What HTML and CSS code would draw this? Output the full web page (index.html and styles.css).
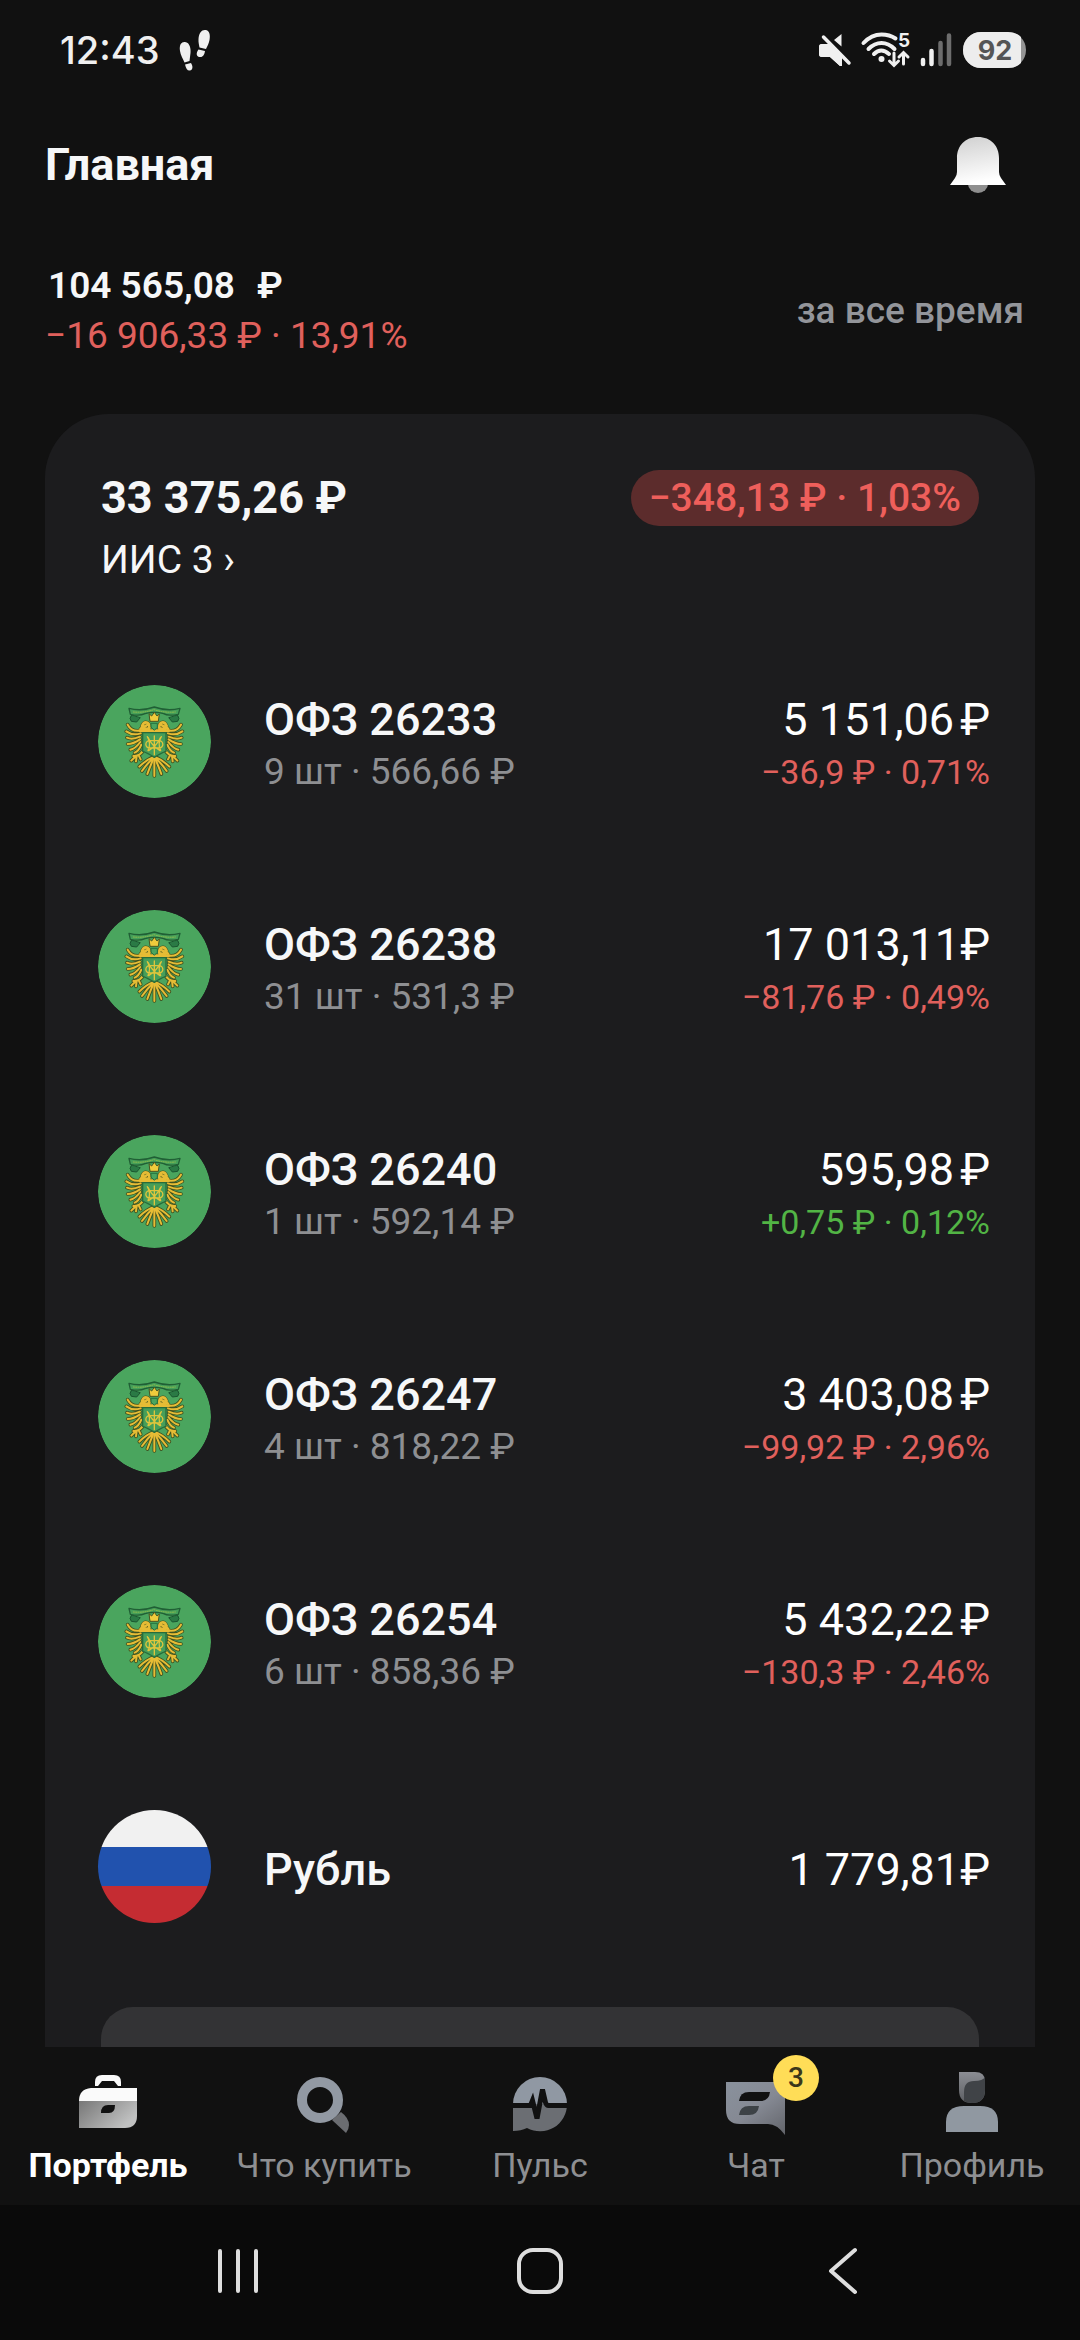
FILE: index.html
```html
<!DOCTYPE html>
<html lang="ru">
<head>
<meta charset="utf-8">
<meta name="viewport" content="width=device-width, initial-scale=1">
<title>Главная</title>
<link rel="stylesheet" href="styles.css">
</head>
<body>
<svg class="defs" aria-hidden="true">
  <defs>
    <linearGradient id="bellFill" x1="0" y1="0" x2="0.2" y2="1"><stop offset="0" stop-color="#cfcfcf"/><stop offset="1" stop-color="#ffffff"/></linearGradient>
    <linearGradient id="caseFill" x1="0" y1="0" x2="1" y2="0.5"><stop offset="0" stop-color="#777777"/><stop offset="1" stop-color="#c0c1c1"/></linearGradient>
    <linearGradient id="chatFill" x1="0.2" y1="0" x2="1" y2="1"><stop offset="0" stop-color="#89909b"/><stop offset="0.45" stop-color="#858993"/><stop offset="1" stop-color="#62646a"/></linearGradient>
    <linearGradient id="headFill" x1="0" y1="0" x2="0" y2="1"><stop offset="0" stop-color="#8b8d93"/><stop offset="1" stop-color="#5d5f63"/></linearGradient>
    <path id="feathers" d="M64 91Q36 98 23 74M62 100Q38 108 19 94M60 110Q36 120 21 113M60 118Q40 132 23 132M61 126Q46 146 31 149M64 134Q56 154 44 158M72 148Q60 170 40 168M48 168L34 182M50 168l-2 16M56 166l6 12M103 170Q80 178 58 200M103 170Q82 190 66 213M103 170Q90 200 82 222"/>
    <path id="heads" d="M86 92Q92 74 82 68Q72 64 66 78M80 76L62 86M84 86L70 88"/>
  </defs>
  <symbol id="ofz" viewBox="0 0 339 339">
    <circle cx="169.500" cy="169.500" r="169.500" fill="#4aa55e"/>
    <g transform="translate(66 45)" fill="none" stroke-linejoin="round" stroke-linecap="round">
      <path d="M34 46q-8 10 0 18l16 2 10-12zM173 46q8 10 0 18l-16 2-10-12z" fill="#2a7a45" stroke="#1b5530" stroke-width="3"/>
      <path d="M27 25q36 10 76-4 40 14 77 4l-5 18q-32 6-44-2-28-8-56 0-16 8-44 2z" fill="#459f59" stroke="#205f35" stroke-width="4"/>
      <path d="M40 36q32 3 62-7 32 10 64 7" stroke="#93bd4d" stroke-width="3" stroke-dasharray="3 4"/>
      <g stroke="#3f5220" stroke-width="11">
        <use href="#feathers"/>
        <use href="#feathers" transform="matrix(-1 0 0 1 206 0)"/>
        <use href="#heads"/>
        <use href="#heads" transform="matrix(-1 0 0 1 206 0)"/>
        <path d="M103 172v56M60 92h86"/>
      </g>
      <g stroke="#e6bc35" stroke-width="6">
        <use href="#feathers"/>
        <use href="#feathers" transform="matrix(-1 0 0 1 206 0)"/>
        <use href="#heads" stroke-width="8"/>
        <use href="#heads" transform="matrix(-1 0 0 1 206 0)" stroke-width="8"/>
        <path d="M103 172v56"/>
        <path d="M60 92h86" stroke-width="8"/>
      </g>
      <path d="M88 42l7 6 8-11 8 11 7-6-3 22H91z" fill="#f0cb3c" stroke="#4c5520" stroke-width="3"/>
      <path d="M94 70h18v12l-9 9-9-9z" fill="#4aa55e" stroke="#27713e" stroke-width="3"/>
      <path d="M68 98h70v56q-14 4-35 18-21-14-35-18z" fill="#469e59" stroke="#276c3b" stroke-width="4"/>
      <path d="M82 110q12 20 2 42M124 110q-12 20-2 42M84 112q10 24 36 40M122 112q-10 24-36 40M103 108v56M91 122c-18-2-18 24 0 22h24c18 2 18-24 0-22z" stroke="#dec53c" stroke-width="4"/>
    </g>
  </symbol>
</svg>

<div class="screen">
  <div class="status">
    <div class="status-left">
      <time class="clock">12:43</time>
      <svg class="steps" width="32" height="42" viewBox="0 0 32 42" fill="#f0f0f0" aria-hidden="true">
        <path d="M1 22C0 15 3 12.500 6 13c5 .500 6 7 5.500 11l-1 8-5 1.500C4 30 1.500 26 1 22zM6 35.500l6-1.500c2.500 4 1.500 7-1 7.500-2.500.500-4-2-5-6zM19.500 10C20 3.500 23 .500 26.500 1c4 .500 5 5 4 10-.700 3.500-2 6-3.500 9l-6.500-1.500c-.500-3-1.200-5-1-8.500zM19.500 20.500l6.500 1.500c-.500 4-2.500 6.500-5.500 6-3.500-.600-3.500-4-1-7.500z"/>
      </svg>
    </div>
    <div class="status-right">
      <svg width="209" height="60" viewBox="818 20 209 60" aria-hidden="true">
        <g fill="#f0f0f0">
          <path d="M822 44h8l12 12v10h-2l-10-9h-8q-3 0-3-3v-7q0-3 3-3zM841.500 34v12.500L834 40z"/>
          <path d="M823.500 37l26 26.500" stroke="#111111" stroke-width="8"/>
          <path d="M822 44h7l13 13v9h-2l-10-9h-8q-3 0-3-3v-7q0-3 3-3z"/>
          <path d="M823.500 37l25.500 26" stroke="#f0f0f0" stroke-width="3.500" stroke-linecap="round"/>
        </g>
        <g fill="none" stroke="#f0f0f0" stroke-width="4" stroke-linecap="round">
          <path d="M863.500 43q8-8.500 18-8.500 8 0 14 4M868.500 49q6-6 13-6t13 6M874 54q7-7 15 0"/>
          <path d="M894 53v12M889.500 61l4.500 4.500 4.500-4.500M903.500 64V53M899 57l4.500-4.500 4.500 4.500" stroke-width="3"/>
          <path d="M923 60v4M931.500 51v13" stroke-width="4.500"/>
          <path d="M940.500 43v21M949 35.500v28.500" stroke="#6d6d6d" stroke-width="4.500"/>
        </g>
        <circle cx="881.500" cy="59" r="3" fill="#f0f0f0"/>
        <text x="898" y="47" class="wifi-five">5</text>
        <rect x="963" y="32" width="63" height="36" rx="18" fill="#949494"/>
        <path d="M981 32h27q8 0 13 5v26q-5 5-13 5h-27a18 18 0 0 1 0-36z" fill="#ededed"/>
        <text x="995" y="60" text-anchor="middle" class="battery-text">92</text>
      </svg>
    </div>
  </div>

  <main class="content">
    <header class="topbar">
      <h1>Главная</h1>
      <button class="bell" type="button" aria-label="Уведомления">
        <svg width="56" height="58" viewBox="0 0 56 58" aria-hidden="true">
          <path d="M18 46h20v2a10 9 0 0 1-20 0z" fill="#8f8f8f"/>
          <path d="M28 1C15 1 7 10 7 22v14q0 3-2 6l-5 7h56l-5-7q-2-3-2-6V22C49 10 41 1 28 1z" fill="url(#bellFill)"/>
        </svg>
      </button>
    </header>

    <section class="summary">
      <div>
        <div class="total"><span>104 565,08</span><span>₽</span></div>
        <div class="total-change">−16 906,33 ₽ · 13,91%</div>
      </div>
      <button class="period" type="button">за все время</button>
    </section>

    <section class="card">
      <div class="card-head">
        <h2>33 375,26 ₽</h2>
        <span class="pill">−348,13 ₽ · 1,03%</span>
      </div>
      <a class="account" href="#iis">ИИС 3 ›</a>

      <ul class="assets">
        <li class="asset">
          <svg class="logo" aria-hidden="true"><use href="#ofz"/></svg>
          <div class="info"><div class="name">ОФЗ 26233</div><div class="detail">9 шт · 566,66 ₽</div></div>
          <div class="figures"><div class="amount">5 151,06<span class="currency">₽</span></div><div class="change down">−36,9 ₽ · 0,71%</div></div>
        </li>
        <li class="asset">
          <svg class="logo" aria-hidden="true"><use href="#ofz"/></svg>
          <div class="info"><div class="name">ОФЗ 26238</div><div class="detail">31 шт · 531,3 ₽</div></div>
          <div class="figures"><div class="amount">17 013,11₽</div><div class="change down">−81,76 ₽ · 0,49%</div></div>
        </li>
        <li class="asset">
          <svg class="logo" aria-hidden="true"><use href="#ofz"/></svg>
          <div class="info"><div class="name">ОФЗ 26240</div><div class="detail">1 шт · 592,14 ₽</div></div>
          <div class="figures"><div class="amount">595,98<span class="currency">₽</span></div><div class="change up">+0,75 ₽ · 0,12%</div></div>
        </li>
        <li class="asset">
          <svg class="logo" aria-hidden="true"><use href="#ofz"/></svg>
          <div class="info"><div class="name">ОФЗ 26247</div><div class="detail">4 шт · 818,22 ₽</div></div>
          <div class="figures"><div class="amount">3 403,08<span class="currency">₽</span></div><div class="change down">−99,92 ₽ · 2,96%</div></div>
        </li>
        <li class="asset">
          <svg class="logo" aria-hidden="true"><use href="#ofz"/></svg>
          <div class="info"><div class="name">ОФЗ 26254</div><div class="detail">6 шт · 858,36 ₽</div></div>
          <div class="figures"><div class="amount">5 432,22<span class="currency">₽</span></div><div class="change down">−130,3 ₽ · 2,46%</div></div>
        </li>
        <li class="asset">
          <span class="logo flag"></span>
          <div class="info"><div class="name">Рубль</div></div>
          <div class="figures"><div class="amount">1 779,81₽</div></div>
        </li>
      </ul>
      <button class="more" type="button" aria-label="Ещё"></button>
    </section>
  </main>

  <nav class="tabs" aria-label="Разделы">
    <a class="tab active" href="#portfolio" aria-current="page">
      <svg class="tab-icon" viewBox="0 0 64 64" aria-hidden="true">
        <path d="M19 15v-4q0-7 7-7h12q7 0 7 7v4h-3l-4-5H26l-4 5z" fill="#fafafa"/>
        <path d="M61 17H15Q3 18 3 30h58z" fill="#fafafa"/>
        <path fill-rule="evenodd" d="M3 30h58v15q0 12-12 12H3zM25 42h8q6 0 6-8h-7q-7 0-7 8z" fill="url(#caseFill)"/>
      </svg>
      <span>Портфель</span>
    </a>
    <a class="tab" href="#buy">
      <svg class="tab-icon" viewBox="0 0 64 64" aria-hidden="true">
        <path d="M40 49l9-8q8 6 8 13 0 4-3 8z" fill="#6b6d71"/>
        <circle cx="28" cy="29" r="18" fill="none" stroke="#9299a3" stroke-width="10"/>
      </svg>
      <span>Что купить</span>
    </a>
    <a class="tab" href="#pulse">
      <svg class="tab-icon" viewBox="0 0 64 64" aria-hidden="true">
        <path d="M5 33a27 27 0 0 1 54 0z" fill="#9098a3"/>
        <path d="M5 33h54A27 27 0 0 1 19 57Q13 60 5 60z" fill="#6b6e73"/>
        <path d="M4 34.500h18.500l2-5 4.500 18 5.500-29 3 13q1 3 3 3H60" fill="none" stroke="#111111" stroke-width="5"/>
      </svg>
      <span>Пульс</span>
    </a>
    <a class="tab" href="#chat">
      <span class="icon-wrap">
        <svg class="tab-icon" viewBox="0 0 64 64" aria-hidden="true">
          <path d="M2 11h59v53q-8-11-17-11H16Q2 53 2 39z" fill="url(#chatFill)"/>
          <path d="M15 30q1-9 10-9h21q-1 9-10 9z" fill="#111111"/>
          <path d="M15 44q1-9 10-9h10q-1 9-10 9z" fill="#3d4246"/>
        </svg>
        <span class="badge">3</span>
      </span>
      <span>Чат</span>
    </a>
    <a class="tab" href="#profile">
      <svg class="tab-icon" viewBox="0 0 64 64" aria-hidden="true">
        <path d="M19 1h16q10 0 10 9v9q0 13-13 13T19 19z" fill="url(#headFill)"/>
        <path d="M24 31V21q0-11 10-11 9 0 11-4v13q0 13-13 13-5 0-8-2z" fill="#404347"/>
        <path d="M6 61V51q0-16 18-16h16q18 0 18 16v10z" fill="#9098a1"/>
      </svg>
      <span>Профиль</span>
    </a>
  </nav>

  <div class="system">
    <button type="button" aria-label="Недавние">
      <svg width="48" height="48" viewBox="0 0 48 48" aria-hidden="true"><path d="M6 4v40M24 4v40M42 4v40"/></svg>
    </button>
    <button type="button" aria-label="Домой">
      <svg width="48" height="48" viewBox="0 0 48 48" aria-hidden="true"><rect x="3" y="3" width="42" height="42" rx="14"/></svg>
    </button>
    <button type="button" aria-label="Назад">
      <svg width="48" height="48" viewBox="0 0 48 48" aria-hidden="true"><path d="M37 3L13 24l24 21"/></svg>
    </button>
  </div>
</div>
</body>
</html>
```
FILE: styles.css
```css
* {
  box-sizing: border-box;
}

body {
  margin: 0;
  background: #111111;
  color: #f6f7f8;
  font-family: Roboto, "Noto Sans", sans-serif;
}

button {
  border: 0;
  padding: 0;
  background: none;
  color: inherit;
  font: inherit;
}

a {
  color: inherit;
  text-decoration: none;
}

h1,
h2,
ul {
  margin: 0;
  padding: 0;
}

.defs {
  position: absolute;
  width: 0;
  height: 0;
}

.screen {
  display: flex;
  flex-direction: column;
  height: 100vh;
}

/* Status bar */

.status {
  flex: none;
  display: flex;
  justify-content: space-between;
  align-items: center;
  height: 100px;
  padding: 0 53px 0 60px;
  font-family: Inter, sans-serif;
}

.status-left {
  display: flex;
  align-items: center;
  gap: 20px;
}

.status-right svg {
  display: block;
}

.clock {
  font-size: 38px;
  font-weight: 500;
  color: #f0f0f0;
}

.wifi-five {
  font: 700 19px Inter, sans-serif;
  fill: #f0f0f0;
}

.battery-text {
  font: 700 27px Inter, sans-serif;
  fill: #555555;
}

/* Page */

.content {
  flex: 1;
  min-height: 0;
  overflow-y: auto;
  scrollbar-width: none;
}

.topbar {
  display: flex;
  justify-content: space-between;
  align-items: center;
  height: 72px;
  margin-top: 29px;
  padding: 0 66px 0 45px;
}

h1 {
  font-size: 45px;
  line-height: 56px;
  font-weight: 700;
}

.bell {
  display: grid;
  place-items: center;
  width: 72px;
  height: 72px;
}

.summary {
  display: flex;
  justify-content: space-between;
  align-items: center;
  margin-top: 60px;
  padding: 0 56px 0 45px;
}

.total {
  display: flex;
  gap: 22px;
  padding-left: 3px;
  font-size: 37px;
  line-height: 50px;
  font-weight: 600;
}

.total-change {
  font-size: 37px;
  line-height: 50px;
  color: #e0605c;
}

.period {
  font-size: 37px;
  line-height: 50px;
  font-weight: 500;
  color: #93959a;
}

.card {
  margin: 53px 45px 0;
  padding: 56px 0 56px;
  border-radius: 64px 64px 0 0;
  background: #1c1c1e;
}

.card-head {
  display: flex;
  justify-content: space-between;
  align-items: center;
  padding: 0 56px;
}

h2 {
  font-size: 45px;
  line-height: 56px;
  font-weight: 700;
}

.pill {
  padding: 0 18px;
  border-radius: 28px;
  background: #5c2c2c;
  color: #ee5f5b;
  font-size: 39px;
  line-height: 56px;
  font-weight: 500;
}

.account {
  display: block;
  width: max-content;
  margin: 10px 56px 0;
  font-size: 39px;
  line-height: 48px;
}

.assets {
  margin-top: 45px;
  padding: 0 45px 0 53px;
  list-style: none;
}

.asset {
  display: flex;
  align-items: center;
  height: 225px;
}

.logo {
  flex: none;
  width: 113px;
  height: 113px;
  border-radius: 50%;
}

.flag {
  background: linear-gradient(#f1f1f1 33%, #2152ae 33% 67%, #c52c32 67%);
}

.info {
  flex: 1;
  padding-top: 6px;
  margin-left: 53px;
}

.figures {
  padding-top: 6px;
  text-align: right;
}

.name,
.amount {
  font-size: 45px;
  line-height: 54px;
}

.name {
  font-weight: 500;
}

.amount {
  color: #ffffff;
}

.currency {
  margin-left: 6px;
}

.detail,
.change {
  margin-top: 1px;
  line-height: 48px;
}

.detail {
  font-size: 37px;
  color: #8e8f92;
}

.change {
  font-size: 34px;
}

.down {
  color: #e0605c;
}

.up {
  color: #52b445;
}

.more {
  display: block;
  width: calc(100% - 112px);
  height: 124px;
  margin: 28px 56px 0;
  border-radius: 32px;
  background: #333335;
}

/* Tab bar */

.tabs {
  flex: none;
  display: grid;
  grid-template-columns: repeat(5, 1fr);
  padding: 24px 0 20px;
}

.tab {
  display: flex;
  flex-direction: column;
  align-items: center;
  gap: 10px;
  font-size: 34px;
  line-height: 40px;
  color: #8e8f92;
}

.active {
  color: #ffffff;
  font-weight: 700;
}

.tab-icon {
  display: block;
  width: 64px;
  height: 64px;
}

.icon-wrap {
  position: relative;
}

.badge {
  position: absolute;
  top: -16px;
  right: -31px;
  width: 46px;
  border-radius: 23px;
  background: #ffdd57;
  color: #3b371a;
  font-size: 28px;
  line-height: 46px;
  font-weight: 500;
  text-align: center;
}

/* System navigation */

.system {
  flex: none;
  display: grid;
  grid-template-columns: repeat(3, 1fr);
  place-items: center;
  height: 135px;
  padding: 0 87px 4px;
  background: #0a0a0a;
}

.system svg {
  display: block;
  fill: none;
  stroke: #dedede;
  stroke-width: 4;
  stroke-linecap: round;
  stroke-linejoin: round;
}
```
